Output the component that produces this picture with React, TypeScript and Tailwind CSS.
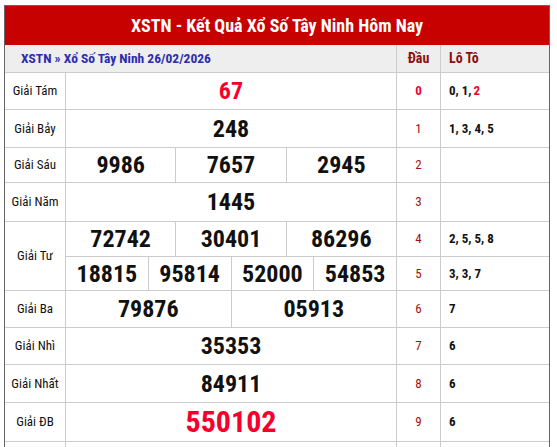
const font = { fontFamily: '"Roboto", "Noto Sans", sans-serif' };

type Row = {
  label?: string;
  span?: number;
  nums: string[];
  red?: boolean;
  big?: boolean;
  h: string;
  dau: string;
  loto: React.ReactNode;
};

const rows: Row[] = [
  { label: "Giải Tám", nums: ["67"], red: true, h: "h-[36px]", dau: "0", loto: <>0, 1,{" "}<span className="ml-[2px] text-[#f5002d]">2</span></> },
  { label: "Giải Bảy", nums: ["248"], h: "h-[37px]", dau: "1", loto: "1, 3, 4, 5" },
  { label: "Giải Sáu", nums: ["9986", "7657", "2945"], h: "h-[34px]", dau: "2", loto: "" },
  { label: "Giải Năm", nums: ["1445"], h: "h-[38px]", dau: "3", loto: "" },
  { label: "Giải Tư", span: 2, nums: ["72742", "30401", "86296"], h: "h-[34px]", dau: "4", loto: "2, 5, 5, 8" },
  { nums: ["18815", "95814", "52000", "54853"], h: "h-[33px]", dau: "5", loto: "3, 3, 7" },
  { label: "Giải Ba", nums: ["79876", "05913"], h: "h-[36px]", dau: "6", loto: "7" },
  { label: "Giải Nhì", nums: ["35353"], h: "h-[36px]", dau: "7", loto: "6" },
  { label: "Giải Nhất", nums: ["84911"], h: "h-[37px]", dau: "8", loto: "6" },
  { label: "Giải ĐB", nums: ["550102"], red: true, big: true, h: "h-[38px]", dau: "9", loto: "6" },
];

export default function App() {
  return (
    <div className="bg-white w-[557px] h-[447px] overflow-hidden pt-[5px] pl-[4px]" style={font}>
      <div className="w-[546px] border-x border-t border-[#666] bg-white">
        {/* Header */}
        <div className="h-[39px] bg-[#c70000] flex items-center justify-center">
          <h1 className="text-white font-bold text-[18px] font-stretch-condensed">
            XSTN - Kết Quả Xổ Số Tây Ninh Hôm Nay
          </h1>
        </div>

        {/* Table */}
        <div className="grid grid-cols-[60px_330px_43px_1fr] gap-px bg-[#ccc] font-stretch-condensed">
          <div className="col-span-2 h-[27px] bg-[#eee] flex items-center pl-4">
            <span className="text-[13.5px] font-bold text-[#2c2cad]">XSTN » Xổ Số Tây Ninh 26/02/2026</span>
          </div>
          <div className="h-[27px] bg-[#eee] flex items-center justify-center text-[14px] font-bold text-[#8b1010]">
            Đầu
          </div>
          <div className="h-[27px] bg-[#eee] flex items-center pl-2 text-[14px] font-bold text-[#8b1010]">
            Lô Tô
          </div>

          {rows.map((r, i) => (
            <Line key={i} r={r} />
          ))}

          <div className="h-[10px] bg-white" />
          <div className="h-[10px] bg-white" />
          <div className="h-[10px] bg-white" />
          <div className="h-[10px] bg-white" />
        </div>
      </div>
    </div>
  );
}

function Line({ r }: { r: Row }) {
  return (
    <>
      {r.label && (
        <div
          className={`bg-white flex items-center justify-center text-[13px] text-[#111] ${
            r.span === 2 ? "row-span-2" : ""
          }`}
        >
          {r.label}
        </div>
      )}
      <div className={`${r.h} flex gap-px`}>
        {r.nums.map((n) => (
          <div
            key={n}
            className={`flex-1 bg-white flex items-center justify-center font-bold leading-none ${
              r.big ? "text-[30px]" : "text-[24px]"
            } ${r.red ? "text-[#f5002d]" : "text-[#111]"}`}
          >
            {n}
          </div>
        ))}
      </div>
      <div
        className={`bg-white flex items-center justify-center text-[13px] ${
          r.dau === "0" ? "text-[#f5002d] font-bold" : "text-[#a01010]"
        }`}
      >
        {r.dau}
      </div>
      <div className="bg-white flex items-center pl-2 text-[13px] font-bold text-[#111]">{r.loto}</div>
    </>
  );
}
